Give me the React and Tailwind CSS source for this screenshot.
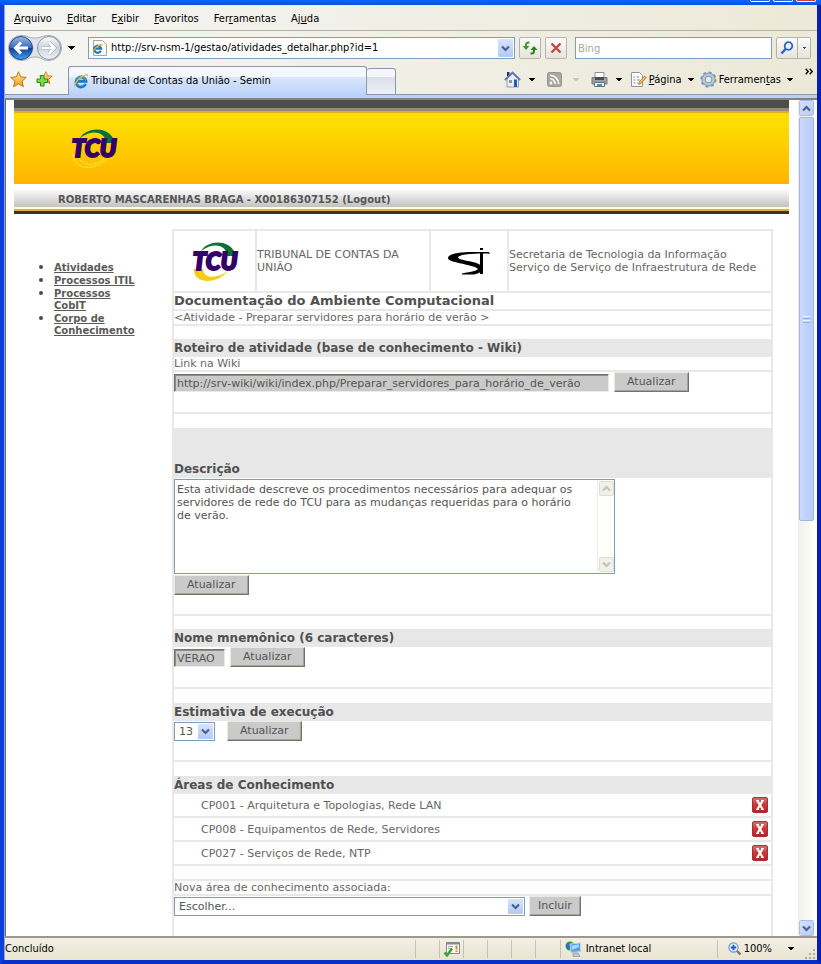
import React from "react";

const VERDANA = "font-['Verdana','DejaVu_Sans',sans-serif]";
const TAHOMA = "font-['Tahoma','DejaVu_Sans_Condensed','DejaVu_Sans',sans-serif]";

function Caret({ className = "text-black" }) {
  return (
    <svg width="7" height="4" viewBox="0 0 7 4" className={`shrink-0 ${className}`} aria-hidden="true" shapeRendering="crispEdges">
      <path d="M0 0H7L3.5 4Z" fill="currentColor" />
    </svg>
  );
}

function Chevron({ up = false, color = "#4d6185" }) {
  return (
    <svg width="9" height="7" viewBox="0 0 9 7" aria-hidden="true">
      <path d={up ? "M1 5.5L4.5 2L8 5.5" : "M1 1.5L4.5 5L8 1.5"} fill="none" stroke={color} strokeWidth="2.2" />
    </svg>
  );
}

function Mnemonic({ text, at }) {
  return (
    <>
      {text.slice(0, at)}
      <u>{text[at]}</u>
      {text.slice(at + 1)}
    </>
  );
}

function IeLogo({ size = 16 }) {
  return (
    <svg width={size} height={size} viewBox="0 0 16 16" aria-hidden="true">
      <path d="M12.6 11A5 5 0 1 1 13 8.2H4.2" fill="none" stroke="#1a78c8" strokeWidth="3" />
      <path d="M12 10.6A4.6 4.6 0 1 1 12.6 7.6" fill="none" stroke="#4fb4ee" strokeWidth="1" />
      <path d="M1.6 15C-.4 12 5 3.600 12 1.500C15 .7 15.800 2 14.800 4.200C14.600 2.400 13.400 2.200 11.600 3C6.500 5 1.800 11 1.600 15Z" fill="#f0b020" />
    </svg>
  );
}

function BackForward() {
  return (
    <div className="relative flex h-[26px] w-[54px] shrink-0">
      <svg width="54" height="26" viewBox="0 0 54 26" aria-hidden="true" className="absolute inset-0">
        <defs>
          <linearGradient id="nb" x1="0" y1="0" x2="0" y2="1">
            <stop offset="0" stopColor="#9db8e4" />
            <stop offset=".48" stopColor="#3a6cc0" />
            <stop offset=".52" stopColor="#0f3f9c" />
            <stop offset="1" stopColor="#3fa4ee" />
          </linearGradient>
          <linearGradient id="nf" x1="0" y1="0" x2="0" y2="1">
            <stop offset="0" stopColor="#fafbfc" />
            <stop offset=".5" stopColor="#cdd4dd" />
            <stop offset="1" stopColor="#eef3f8" />
          </linearGradient>
        </defs>
        <path d="M13 .5C20 .5 20 3 27 3S34 .5 41 .5A12.500 12.500 0 0 1 41 25.500C34 25.500 34 22 27 22S20 25.500 13 25.500A12.500 12.500 0 0 1 13 .5Z" fill="#dfe2e6" stroke="#a9adb3" />
        <circle cx="13" cy="13" r="11.5" fill="url(#nb)" stroke="#26498e" />
        <circle cx="41" cy="13" r="11.5" fill="url(#nf)" stroke="#8e97a3" />
        <path d="M20 13H8M13 7.500L7.500 13L13 18.500" fill="none" stroke="#fff" strokeWidth="3" />
        <path d="M34 13H46M41 7.500L46.500 13L41 18.500" fill="none" stroke="#a8b0bb" strokeWidth="4" />
        <path d="M34 13H46M41 7.500L46.500 13L41 18.500" fill="none" stroke="#fff" strokeWidth="2.600" />
      </svg>
      <button aria-label="Voltar" className="relative h-[26px] flex-1" />
      <button aria-label="Avançar" className="relative h-[26px] flex-1" />
    </div>
  );
}

const STAR = "M8 .8L10.100 5.500L15.300 6L11.400 9.500L12.600 14.800L8 12L3.400 14.800L4.600 9.500L.7 6L5.900 5.500Z";

function StarIcon() {
  return (
    <svg width="17" height="17" viewBox="0 0 16 16" aria-hidden="true">
      <defs>
        <linearGradient id="st" x1="0" y1="0" x2="0" y2="1">
          <stop offset="0" stopColor="#ffe9a0" />
          <stop offset="1" stopColor="#f79a10" />
        </linearGradient>
      </defs>
      <path d={STAR} fill="url(#st)" stroke="#b9741a" strokeWidth=".9" />
    </svg>
  );
}

function StarPlusIcon() {
  return (
    <svg width="17" height="17" viewBox="0 0 17 17" aria-hidden="true">
      <g transform="translate(3 0) scale(.86)">
        <path d={STAR} fill="url(#st)" stroke="#b9741a" strokeWidth=".9" />
      </g>
      <path d="M4.500 4.500H8V8H11.500V11.500H8V15H4.500V11.500H1V8H4.500Z" fill="#7ddc4a" stroke="#2d8a1c" />
    </svg>
  );
}

function HomeIcon() {
  return (
    <svg width="17" height="17" viewBox="0 0 17 17" aria-hidden="true">
      <path d="M3 1H5.500V5H3Z" fill="#1a2f8c" />
      <path d="M3 7.500L8.500 2.500L14.500 8V16H3Z" fill="#e9edf3" stroke="#7f8ba0" strokeWidth=".8" />
      <path d="M.8 9L8.500 1.500L16.200 9" fill="none" stroke="#5f76b0" strokeWidth="1.800" />
      <path d="M5 9H8V12H5Z" fill="#8b94a0" />
      <path d="M10 8.500H13V16H10Z" fill="#245cb4" />
    </svg>
  );
}

function RssIcon() {
  return (
    <svg width="15" height="15" viewBox="0 0 15 15" aria-hidden="true">
      <rect x=".5" y=".5" width="14" height="14" rx="2" fill="#a8a8a0" stroke="#96968e" />
      <circle cx="4" cy="11" r="1.400" fill="#fff" />
      <path d="M3 6.800A5.200 5.200 0 0 1 8.200 12M3 3.300A8.700 8.700 0 0 1 11.700 12" fill="none" stroke="#fff" strokeWidth="1.500" />
    </svg>
  );
}

function PrinterIcon() {
  return (
    <svg width="17" height="16" viewBox="0 0 17 16" aria-hidden="true">
      <path d="M4 .5H13V6H4Z" fill="#fff" stroke="#8a8f96" />
      <path d="M1 5.500H16V12H1Z" fill="#9a9ea3" stroke="#74787e" />
      <path d="M4 5H13V8H4Z" fill="#4a4e54" />
      <path d="M3.500 10.500H13.500V14.500H3.500Z" fill="#eef4fa" stroke="#6a7078" />
      <path d="M6 12H11V14H6Z" fill="#3f8fd8" />
    </svg>
  );
}

function PageIcon() {
  return (
    <svg width="17" height="17" viewBox="0 0 17 17" aria-hidden="true">
      <path d="M1.500 1.500H9.500L12.500 4.500V15.500H1.500Z" fill="#fcfcfd" stroke="#8c96a4" />
      <path d="M3.500 6H5.500M3.500 9H5.500M3.500 12H5.500" stroke="#7f96bd" strokeWidth="1.200" />
      <path d="M7 6H9M7 9H10M7 12H8" stroke="#8a929e" />
      <path d="M8.500 13.500L9.300 10.800L14.500 5L16.200 6.600L11 12.500Z" fill="#f3bd45" stroke="#94642a" strokeWidth=".7" />
    </svg>
  );
}

function GearIcon() {
  return (
    <svg width="17" height="17" viewBox="0 0 17 17" aria-hidden="true">
      <circle cx="8.500" cy="8.500" r="7" fill="none" stroke="#7894ac" strokeWidth="2.200" strokeDasharray="2.750 2.750" />
      <circle cx="8.500" cy="8.500" r="4.900" fill="none" stroke="#7f9cb4" strokeWidth="4.400" />
      <circle cx="8.500" cy="8.500" r="4.900" fill="none" stroke="#b4cadb" strokeWidth="2.400" />
    </svg>
  );
}

function RefreshIcon() {
  return (
    <svg width="16" height="16" viewBox="0 0 16 16" aria-hidden="true">
      <path d="M7.500 2.500H6.500Q4 2.500 4 5V7" fill="none" stroke="#3b9b2f" strokeWidth="2" />
      <path d="M.5 6H7.500L4 10Z" fill="#3b9b2f" />
      <path d="M8.500 13.500H9.500Q12 13.500 12 11V9" fill="none" stroke="#2b8424" strokeWidth="2" />
      <path d="M8.500 10H15.500L12 6Z" fill="#2b8424" />
    </svg>
  );
}

function TcuLogo({ light = false }) {
  return (
    <svg width="54" height="44" viewBox="0 0 54 44" role="img" aria-label="TCU">
      <path d="M13 12C20 1 41 0 47 14L46 17H39C39 7 27 2 13 12Z" fill="#0c7036" />
      {light ? (
        <path d="M6 28C7 45 30 45 41 32M11 30C14 41 29 41 38 32" fill="none" stroke="#ffef50" strokeWidth="1" strokeDasharray="3 1" />
      ) : (
        <path d="M6 30C5 45 29 46 40 32C30 39 16 41 15 30Z" fill="#f8cc14" />
      )}
      <text
        x="27"
        y="31"
        textAnchor="middle"
        fontFamily="Lato, sans-serif"
        fontWeight="900"
        fontStyle="italic"
        fontSize="24"
        fill="#33006b"
        stroke="#33006b"
        strokeWidth="2"
      >
        TCU
      </text>
    </svg>
  );
}

function StiLogo() {
  return (
    <svg width="44" height="28" viewBox="0 0 44 28" role="img" aria-label="STI">
      <path d="M43 7L42 5H26C12 5 1 7 1 11C1 16 26 17 31 22C28 25 21 25 15 26.500V27.500H27C33 26 36 24 35 20C33 14 12 14 11 10.500C12 7 26 6.500 41 6.500Z" fill="#000" />
      <path d="M33 5H36V27H33ZM33 1H36V3H33Z" fill="#000" />
    </svg>
  );
}

const MENUS = [
  ["Arquivo", 0],
  ["Editar", 0],
  ["Exibir", 1],
  ["Favoritos", 0],
  ["Ferramentas", 3],
  ["Ajuda", 2],
];

const toolBtn =
  "flex h-[22px] w-[22px] items-center justify-center rounded-[2px] border border-[#b5b4ac] bg-linear-to-b from-[#fbfbfa] to-[#e6e4da]";

function BrowserChrome() {
  return (
    <header className={`${TAHOMA} shrink-0 bg-linear-to-r from-[#f5f5f3] to-[#ece9d8] text-[11px] leading-[14px] text-black`}>
      <nav className="flex h-[26px] items-center gap-[15px] border-b border-[#b3b0a5] pl-[9px] pt-[2px]">
        {MENUS.map(([text, at]) => (
          <button key={text}>
            <Mnemonic text={text} at={at} />
          </button>
        ))}
      </nav>
      <div className="flex h-[34px] items-center pl-[3px] pr-[6px]">
        <BackForward />
        <button aria-label="Páginas recentes" className="px-[6px]">
          <Caret />
        </button>
        <div className="ml-[7px] flex h-[22px] flex-[430] items-center border border-[#7f9db9] bg-white pl-[3px] pr-px">
          <svg width="16" height="18" viewBox="0 0 16 18" aria-hidden="true">
            <path d="M1.500 1.500H10.500L14.500 5.500V16.500H1.500Z" fill="#fff" stroke="#a5a5a5" />
            <g transform="translate(0 4) scale(.7)">
              <path d="M12.600 11A5 5 0 1 1 13 8.200H4.200" fill="none" stroke="#1a78c8" strokeWidth="3.200" />
              <path d="M1.600 15C-.4 12 5 3.600 12 1.500C15 .7 15.800 2 14.800 4.200C11.600 2 3 8 1.600 15Z" fill="#f0b020" />
            </g>
          </svg>
          <input
            aria-label="Endereço"
            defaultValue="http://srv-nsm-1/gestao/atividades_detalhar.php?id=1"
            className="min-w-0 flex-1 bg-transparent pl-[3px] outline-none"
          />
          <button aria-label="Mostrar endereços" className="flex h-[18px] w-[15px] items-center justify-center rounded-[1px] bg-linear-to-b from-[#d8e3fc] to-[#b3c8f6]">
            <Chevron />
          </button>
        </div>
        <button aria-label="Atualizar página" className={`${toolBtn} ml-1`}>
          <RefreshIcon />
        </button>
        <button aria-label="Parar" className={`${toolBtn} ml-1`}>
          <svg width="12" height="12" viewBox="0 0 12 12" aria-hidden="true">
            <path d="M1.500 1.500L10.500 10.500M10.500 1.500L1.500 10.500" stroke="#c4484a" strokeWidth="2.400" />
          </svg>
        </button>
        <input
          aria-label="Pesquisar"
          placeholder="Bing"
          className="ml-2 h-[22px] min-w-0 flex-[195] border border-[#7f9db9] bg-white px-[2px] outline-none placeholder:text-[#aca899]"
        />
        <div className="ml-1 flex h-[22px] w-[35px] rounded-[2px] border border-[#b5b4ac] bg-linear-to-b from-[#fbfbfa] to-[#e6e4da]">
          <button aria-label="Buscar" className="flex w-[21px] items-center justify-center border-r border-[#b5b4ac]">
            <svg width="14" height="14" viewBox="0 0 14 14" aria-hidden="true">
              <circle cx="8.500" cy="5" r="3.800" fill="#eaf3ff" stroke="#2a62cc" strokeWidth="1.800" />
              <path d="M5.800 7.800L1.500 12.500" stroke="#2a62cc" strokeWidth="2.400" />
            </svg>
          </button>
          <button aria-label="Opções de pesquisa" className="flex flex-1 items-center justify-center">
            <Caret className="w-[5px] text-[#1c50b8]" />
          </button>
        </div>
      </div>
      <div className="flex h-[30px] items-end">
        <div className="flex h-full w-[63px] items-center gap-[9px] border-b border-[#8d97ad] pl-[5px]">
          <button aria-label="Favoritos">
            <StarIcon />
          </button>
          <button aria-label="Adicionar a favoritos">
            <StarPlusIcon />
          </button>
        </div>
        <div className="flex h-[29px] w-[299px] items-center rounded-t-[3px] border border-b-0 border-[#8d97ad] bg-linear-to-b from-[#f4f8fe] from-35% via-[#dbe7fb] via-36% to-[#bad2fa] pl-1">
          <IeLogo />
          <span className="pl-[2px]">Tribunal de Contas da União - Semin</span>
        </div>
        <button aria-label="Nova guia" className="h-[27px] w-[29px] rounded-t-[3px] border border-l-0 border-[#8d97ad] bg-linear-to-b from-[#f6f7fb] from-30% via-[#dadeea] via-31% to-[#eef0f9]" />
        <div className="flex h-full flex-1 items-center justify-end border-b border-[#8d97ad] pr-1">
          <button aria-label="Página inicial" className="flex items-center gap-2">
            <HomeIcon />
            <Caret className="w-[6px]" />
          </button>
          <button aria-label="Feeds" className="ml-3 flex items-center gap-[11px]">
            <RssIcon />
            <Caret className="w-[6px] text-[#c8c5b8]" />
          </button>
          <button aria-label="Imprimir" className="ml-3 flex items-center gap-2">
            <PrinterIcon />
            <Caret className="w-[6px]" />
          </button>
          <button className="ml-2 flex items-center gap-[2px]">
            <PageIcon />
            <span className="pr-1">
              <Mnemonic text="Página" at={0} />
            </span>
            <Caret className="w-[6px]" />
          </button>
          <button className="ml-[6px] flex items-center gap-[2px]">
            <GearIcon />
            <span className="pr-1">
              <Mnemonic text="Ferramentas" at={8} />
            </span>
            <Caret className="w-[6px]" />
          </button>
          <button aria-label="Mais comandos" className="ml-3 self-start pt-[3px]">
            <svg width="8" height="7" viewBox="0 0 8 7" aria-hidden="true">
              <path d="M.7 .7L3.200 3.500L.7 6.300M4.700 .7L7.200 3.500L4.700 6.300" fill="none" stroke="#000" strokeWidth="1.400" />
            </svg>
          </button>
        </div>
      </div>
      <div className="h-[5px] border-b-2 border-[#84827a] bg-[#bcd0f5]" />
    </header>
  );
}

const scrollBtn =
  "flex h-4 w-full shrink-0 items-center justify-center rounded-[2px] border border-white bg-linear-to-br from-[#d5e1fd] to-[#b6cbf8] outline outline-[#a9bdec] -outline-offset-1";

function PageScrollbar() {
  return (
    <div className="flex w-[17px] shrink-0 flex-col bg-linear-to-r from-[#f0efe8] to-[#fefefb] px-px">
      <button aria-label="Rolar para cima" className={scrollBtn}>
        <Chevron up />
      </button>
      <div className="flex-[404] pt-px">
        <div className="flex h-full flex-col items-center justify-center gap-px rounded-[2px] border border-[#9eb4e2] bg-linear-to-r from-[#cbdafd] to-[#b7cbf9]">
          <i className="h-px w-[7px] bg-[#eef4fe]" />
          <i className="h-px w-[7px] bg-[#8cb0f8]" />
          <i className="h-px w-[7px] bg-[#eef4fe]" />
          <i className="h-px w-[7px] bg-[#8cb0f8]" />
        </div>
      </div>
      <div className="flex-[399]" />
      <button aria-label="Rolar para baixo" className={scrollBtn}>
        <Chevron />
      </button>
    </div>
  );
}

function SiteBanner() {
  return (
    <div className="shrink-0">
      <div className="h-2 bg-[#4d4d4d]" />
      <div className="h-[3px] bg-[#95897e]" />
      <div className="flex h-[73px] border-t-2 border-[#e4ac20] bg-linear-to-b from-[#fddd00] from-15% to-[#ffb400] pl-[53px] pt-[13px]">
        <TcuLogo light />
      </div>
      <div className="flex h-[23px] items-end bg-linear-to-b from-white from-20% to-[#c2c2c2] pb-[1px] pl-11 text-[10px] font-bold leading-[13px] text-[#555]">
        <span>
          ROBERTO MASCARENHAS BRAGA - X00186307152 (<a href="#logout">Logout</a>)
        </span>
      </div>
      <div className="h-[2px] bg-[#fffbd8]" />
      <div className="h-[2px] bg-[#deb13a]" />
      <div className="h-[3px] bg-[#3f3422]" />
    </div>
  );
}

function Sidebar() {
  return (
    <nav className="w-[158px] shrink-0 pl-10 pt-[32px]">
      <ul className="w-[90px] list-disc text-[10px] font-bold leading-[12px] text-[#5a5a5a] marker:text-[13px] marker:text-[#4b4b4b]">
        {["Atividades", "Processos ITIL", "Processos CobIT", "Corpo de Conhecimento"].map((t) => (
          <li key={t}>
            <a href="#menu" className="underline">
              {t}
            </a>
          </li>
        ))}
      </ul>
    </nav>
  );
}

function ActionButton({ children, className = "px-3" }) {
  return (
    <button
      className={`h-5 border border-b-[#77736a] border-l-[#ebe9e2] border-r-[#77736a] border-t-[#ebe9e2] bg-[#cacaca] text-[11px] leading-[14px] text-[#555] shadow-[inset_-1px_-1px_0_#a5a298] ${className}`}
    >
      {children}
    </button>
  );
}

function SectionTitle({ children }) {
  return <h2 className="h-[18px] bg-[#e7e7e7] pt-px text-[12px] font-bold leading-4 text-[#505050]">{children}</h2>;
}

function Dropdown({ id, label, options, className }) {
  return (
    <div className={`relative ${className}`}>
      <select
        id={id}
        aria-label={label}
        className="h-[19px] w-full appearance-none border border-[#7f9db9] bg-white pl-1 text-[11px] leading-[14px] text-[#555] outline-none"
      >
        {options.map((o) => (
          <option key={o}>{o}</option>
        ))}
      </select>
      <span className="pointer-events-none absolute right-[2px] top-[2px] flex h-[15px] w-[15px] items-center justify-center rounded-[1px] bg-linear-to-b from-[#d8e3fc] to-[#b3c8f6]">
        <Chevron />
      </span>
    </div>
  );
}

const sunken =
  "h-[18px] border border-b-[#eceae2] border-l-[#77736a] border-r-[#eceae2] border-t-[#77736a] bg-[#cacaca] text-[11px] leading-[14px] text-[#555] shadow-[inset_1px_1px_0_#8f8c80] outline-none";
const areaBtn = "flex h-[15px] w-[15px] items-center justify-center rounded-[2px] border border-[#e0ded4] bg-[#f1f0ea]";

const AREAS = [
  "CP001 - Arquitetura e Topologias, Rede LAN",
  "CP008 - Equipamentos de Rede, Servidores",
  "CP027 - Serviços de Rede, NTP",
];

function DeleteIcon() {
  return (
    <svg width="16" height="16" viewBox="0 0 16 16" aria-hidden="true">
      <defs>
        <linearGradient id="del" x1="0" y1="0" x2="0" y2="1">
          <stop offset="0" stopColor="#d77272" />
          <stop offset=".45" stopColor="#cc3b3b" />
          <stop offset="1" stopColor="#b82222" />
        </linearGradient>
      </defs>
      <rect x=".5" y=".5" width="15" height="15" rx="1.500" fill="url(#del)" stroke="#a83030" />
      <path d="M5.500 4L10.500 12M10.500 4L5.500 12" stroke="#fff" strokeWidth="2.200" />
      <path d="M4 3.700H7M9 3.700H12M4 12.300H7M9 12.300H12" stroke="#fff" strokeWidth="1.200" />
    </svg>
  );
}

function ActivityForm() {
  return (
    <main className="mr-4 min-w-0 flex-1 border-2 border-b-0 border-[#e8e8e8] text-[11px] leading-[13px] text-[#666]">
      <div className="flex h-[60px] divide-x-2 divide-[#e8e8e8]">
        <div className="flex w-[83px] shrink-0 items-center justify-center">
          <TcuLogo />
        </div>
        <div className="flex min-w-0 flex-1 items-center">TRIBUNAL DE CONTAS DA UNIÃO</div>
        <div className="flex w-[78px] shrink-0 items-center justify-center">
          <StiLogo />
        </div>
        <div className="flex w-[262px] items-center">
          <p>
            Secretaria de Tecnologia da Informação
            <br />
            Serviço de Serviço de Infraestrutura de Rede
          </p>
        </div>
      </div>

      <h1 className="h-[18px] border-t-2 border-[#e8e8e8] text-[13px] font-bold leading-4 text-[#505050]">
        Documentação do Ambiente Computacional
      </h1>
      <p className="border-y-2 border-[#e8e8e8]">&lt;Atividade - Preparar servidores para horário de verão &gt;</p>
      <div className="h-[13px]" />

      <SectionTitle>Roteiro de atividade (base de conhecimento - Wiki)</SectionTitle>
      <label htmlFor="wiki" className="block border-b-2 border-[#e8e8e8]">
        Link na Wiki
      </label>
      <div className="flex h-[40px] items-start gap-[5px]">
        <input
          id="wiki"
          readOnly
          defaultValue="http://srv-wiki/wiki/index.php/Preparar_servidores_para_horário_de_verão"
          className={`${sunken} mt-[2px] w-[435px] min-w-0 pl-[2px]`}
        />
        <ActionButton>Atualizar</ActionButton>
      </div>

      <div className="h-4 border-t-2 border-[#e8e8e8]" />
      <div className="h-8 bg-[#e7e7e7]" />
      <SectionTitle>
        <label htmlFor="descricao">Descrição</label>
      </SectionTitle>
      <div className="h-[136px] pt-px">
        <div className="relative h-[95px] w-[441px] max-w-full">
          <textarea
            id="descricao"
            defaultValue="Esta atividade descreve os procedimentos necessários para adequar os servidores de rede do TCU para as mudanças requeridas para o horário de verão."
            className="block h-full w-full resize-none overflow-hidden border border-[#7f9db9] bg-white py-[3px] pl-[2px] pr-8 text-[#555] outline-none"
          />
          <div className="absolute inset-y-px right-px flex w-[17px] flex-col justify-between border-l border-[#eeeee8] bg-[#fefefb] p-px">
            <button aria-label="Rolar texto para cima" className={areaBtn}>
              <Chevron up color="#c6c5ba" />
            </button>
            <button aria-label="Rolar texto para baixo" className={areaBtn}>
              <Chevron color="#c6c5ba" />
            </button>
          </div>
        </div>
        <ActionButton className="mt-px px-3">Atualizar</ActionButton>
      </div>

      <div className="h-[15px] border-t-2 border-[#e8e8e8]" />
      <SectionTitle>
        <label htmlFor="nome">Nome mnemônico (6 caracteres)</label>
      </SectionTitle>
      <div className="flex h-[40px] items-start gap-[5px]">
        <input id="nome" readOnly defaultValue="VERAO" className={`${sunken} mt-[2px] w-[51px] pl-[2px]`} />
        <ActionButton>Atualizar</ActionButton>
      </div>

      <div className="h-4 border-t-2 border-[#e8e8e8]" />
      <SectionTitle>
        <label htmlFor="estimativa">Estimativa de execução</label>
      </SectionTitle>
      <div className="flex h-[39px] items-start gap-3">
        <Dropdown id="estimativa" options={["13"]} className="mt-px w-[41px]" />
        <ActionButton>Atualizar</ActionButton>
      </div>

      <div className="h-4 border-t-2 border-[#e8e8e8]" />
      <SectionTitle>Áreas de Conhecimento</SectionTitle>
      <ul>
        {AREAS.map((area) => (
          <li key={area} className="flex h-6 items-center justify-between border-b-2 border-[#e8e8e8] pl-[27px] pr-[3px]">
            {area}
            <button aria-label={`Excluir ${area}`}>
              <DeleteIcon />
            </button>
          </li>
        ))}
      </ul>
      <div className="h-[13px]" />
      <label htmlFor="nova" className="block border-y-2 border-[#e8e8e8]">
        Nova área de conhecimento associada:
      </label>
      <div className="flex h-[60px] items-start gap-1">
        <Dropdown id="nova" options={["Escolher..."]} className="mt-px w-[351px]" />
        <ActionButton className="px-2">Incluir</ActionButton>
      </div>
    </main>
  );
}

function StatusBar() {
  return (
    <footer
      className={`${TAHOMA} flex h-6 shrink-0 items-center border-t-2 border-[#9c998c] bg-linear-to-b from-[#f2f0e6] to-[#e9e5d0] text-[11px] leading-[14px] text-black`}
    >
      <span className="flex-1">Concluído</span>
      <div className="flex h-[18px] divide-x divide-[#c5c2b2] border-x border-[#c5c2b2]">
        <div className="w-6" />
        <div className="flex w-6 items-center justify-center">
          <svg width="17" height="16" viewBox="0 0 17 16" aria-hidden="true">
            <path d="M3.500 1.500H16.500V12.500H3.500Z" fill="#f7f7f4" stroke="#868a90" />
            <path d="M3.500 2.500H16.500" stroke="#868a90" strokeWidth="2" />
            <path d="M5 5.500H10M5 7.500H9" stroke="#a5a8ac" />
            <path d="M12.500 4.500H14.500V8.500H12.500ZM12.500 9.500H14.500V11H12.500Z" fill="#e88a1c" />
            <path d="M1.500 11.500L4 14.500L9 7.500" fill="none" stroke="#3ea52e" strokeWidth="2.400" />
          </svg>
        </div>
        <div className="w-6" />
        <div className="w-6" />
        <div className="w-6" />
        <div className="w-6" />
      </div>
      <div className="flex h-[18px] w-[157px] items-center gap-1 border-r border-[#c5c2b2] pl-1">
        <svg width="17" height="17" viewBox="0 0 17 17" aria-hidden="true">
          <circle cx="5" cy="5" r="4.500" fill="#2f9a3c" />
          <path d="M1 4Q4 1 6 3T3 8Q1 7 1 4Z" fill="#2d6cd0" />
          <path d="M5 3L15.500 2V10.500L6 11.500Z" fill="#4da3ee" stroke="#c8d0da" />
          <path d="M6.500 4.500L14 3.500V6L6.800 9Z" fill="#a8d8fb" />
          <path d="M8 12H13L15 15.500H8Z" fill="#c2c8d0" stroke="#8e959e" strokeWidth=".7" />
        </svg>
        Intranet local
      </div>
      <button className="flex items-center gap-[2px] pl-[10px]">
        <svg width="14" height="14" viewBox="0 0 14 14" aria-hidden="true">
          <path d="M8.500 8.500L12.500 12.500" stroke="#8d6d55" strokeWidth="2.400" />
          <circle cx="5.500" cy="5.500" r="4.600" fill="#e6f2ff" stroke="#6b9bd8" strokeWidth="1.200" />
          <path d="M5.500 2.800V8.200M2.800 5.500H8.200" stroke="#1c5cc4" strokeWidth="1.800" />
        </svg>
        <span className="pr-[14px]">100%</span>
        <Caret className="w-[6px]" />
      </button>
      <svg width="12" height="12" viewBox="0 0 12 12" className="ml-[10px] mr-px self-end" aria-hidden="true">
        <path d="M9 1H11V3H9ZM5 5H7V7H5ZM9 5H11V7H9ZM1 9H3V11H1ZM5 9H7V11H5ZM9 9H11V11H9Z" fill="#b3afa0" />
      </svg>
    </footer>
  );
}

export default function App() {
  return (
    <div className="flex h-screen flex-col overflow-hidden bg-[#0a34d0]">
      <div className="flex h-[5px] shrink-0 justify-end gap-[3px] bg-linear-to-b from-[#0a66ff] to-[#0a50e0] pr-[5px]">
        <i className="h-[2px] w-5 rounded-b-[3px] border border-t-0 border-white bg-[#2c62e0]" />
        <i className="h-[2px] w-5 rounded-b-[3px] border border-t-0 border-white bg-[#2c62e0]" />
        <i className="h-[2px] w-5 rounded-b-[3px] border border-t-0 border-white bg-[#c84030]" />
      </div>
      <div className="flex min-h-0 flex-1 flex-col border-x-4 border-b-4 border-l-[#0c3fe0] border-r-[#0420b0] border-b-[#0830c8]">
        <div className="flex min-h-0 flex-1 flex-col border-l border-[#8fa5d8]">
          <BrowserChrome />
          <div className={`${VERDANA} flex min-h-0 flex-1 border-l border-[#6b6b66] bg-white pr-[2px]`}>
            <div className="flex min-w-0 flex-1 flex-col overflow-hidden pl-2 pr-[9px]">
              <SiteBanner />
              <div className="flex min-h-0 flex-1 pt-[15px]">
                <Sidebar />
                <ActivityForm />
              </div>
            </div>
            <PageScrollbar />
          </div>
          <StatusBar />
        </div>
      </div>
    </div>
  );
}
